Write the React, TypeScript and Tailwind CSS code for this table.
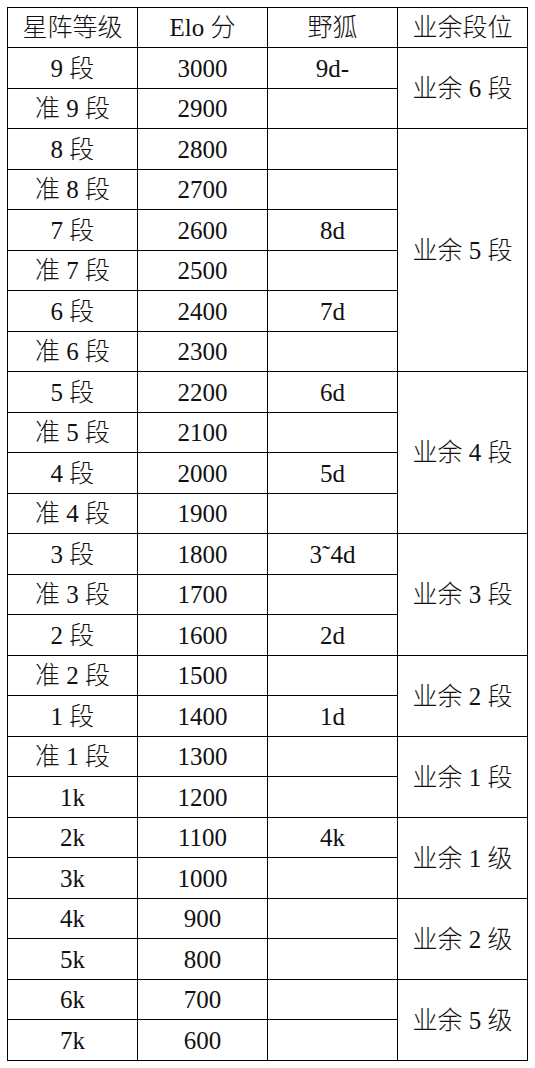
type Row = { rank: string; elo: string; fox: string };

const rows: Row[] = [
  { rank: '9 段', elo: '3000', fox: '9d-' },
  { rank: '准 9 段', elo: '2900', fox: '' },
  { rank: '8 段', elo: '2800', fox: '' },
  { rank: '准 8 段', elo: '2700', fox: '' },
  { rank: '7 段', elo: '2600', fox: '8d' },
  { rank: '准 7 段', elo: '2500', fox: '' },
  { rank: '6 段', elo: '2400', fox: '7d' },
  { rank: '准 6 段', elo: '2300', fox: '' },
  { rank: '5 段', elo: '2200', fox: '6d' },
  { rank: '准 5 段', elo: '2100', fox: '' },
  { rank: '4 段', elo: '2000', fox: '5d' },
  { rank: '准 4 段', elo: '1900', fox: '' },
  { rank: '3 段', elo: '1800', fox: '3˜4d' },
  { rank: '准 3 段', elo: '1700', fox: '' },
  { rank: '2 段', elo: '1600', fox: '2d' },
  { rank: '准 2 段', elo: '1500', fox: '' },
  { rank: '1 段', elo: '1400', fox: '1d' },
  { rank: '准 1 段', elo: '1300', fox: '' },
  { rank: '1k', elo: '1200', fox: '' },
  { rank: '2k', elo: '1100', fox: '4k' },
  { rank: '3k', elo: '1000', fox: '' },
  { rank: '4k', elo: '900', fox: '' },
  { rank: '5k', elo: '800', fox: '' },
  { rank: '6k', elo: '700', fox: '' },
  { rank: '7k', elo: '600', fox: '' },
];

// amateur rank spans, keyed by the row index where they start
const amateur: Record<number, { label: string; span: number }> = {
  0: { label: '业余 6 段', span: 2 },
  2: { label: '业余 5 段', span: 6 },
  8: { label: '业余 4 段', span: 4 },
  12: { label: '业余 3 段', span: 3 },
  15: { label: '业余 2 段', span: 2 },
  17: { label: '业余 1 段', span: 2 },
  19: { label: '业余 1 级', span: 2 },
  21: { label: '业余 2 级', span: 2 },
  23: { label: '业余 5 级', span: 2 },
};

const cell = 'border border-black p-0 text-center align-middle font-light'

export default function App() {
  return (
    <div
      className="min-h-[1068px] bg-white pt-[7px] pl-[7px] text-[25px] leading-none text-[#111]"
      style={{ fontFamily: '"Liberation Serif", "Noto Sans CJK SC", serif' }}
    >
      <table className="w-[520px] table-fixed border-collapse">
        <colgroup>
          <col className="w-[130px]" />
          <col className="w-[130px]" />
          <col className="w-[130px]" />
          <col className="w-[130px]" />
        </colgroup>
        <thead>
          <tr className="h-[40px]">
            <th className={cell}>星阵等级</th>
            <th className={cell}>Elo 分</th>
            <th className={cell}>野狐</th>
            <th className={cell}>业余段位</th>
          </tr>
        </thead>
        <tbody>
          {rows.map((r, i) => (
            <tr key={r.elo} className={i % 2 === 0 ? 'h-[41px]' : 'h-[40px]'}>
              <td className={cell}>{r.rank}</td>
              <td className={cell}>{r.elo}</td>
              <td className={cell}>{r.fox}</td>
              {amateur[i] && (
                <td className={cell} rowSpan={amateur[i].span}>
                  {amateur[i].label}
                </td>
              )}
            </tr>
          ))}
        </tbody>
      </table>
    </div>
  )
}
